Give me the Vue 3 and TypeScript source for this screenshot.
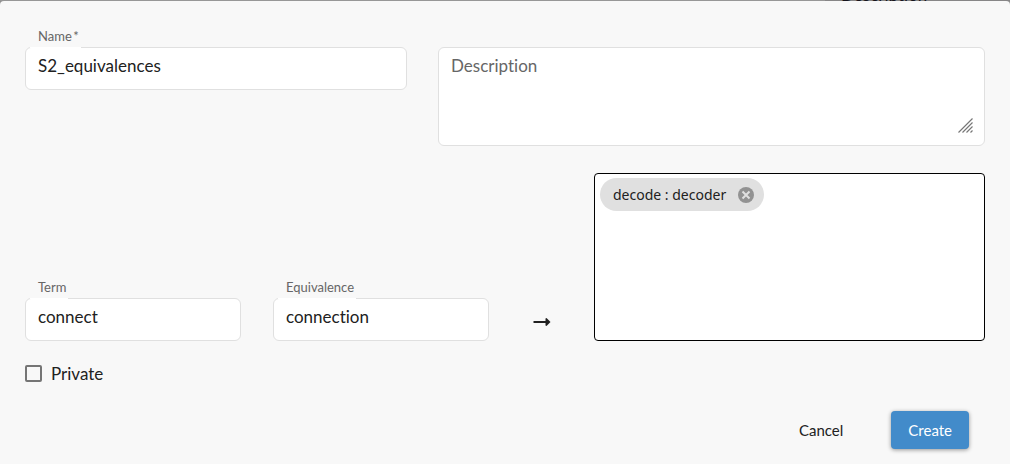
<script setup lang="ts">
import { ref } from 'vue'

const name = ref('S2_equivalences')
const description = ref('')
const term = ref('connect')
const equivalence = ref('connection')
const isPrivate = ref(false)
const pairs = ref<string[]>(['decode : decoder'])

function addPair(): void {
  if (term.value && equivalence.value) {
    pairs.value.push(`${term.value} : ${equivalence.value}`)
  }
}

function removePair(index: number): void {
  pairs.value.splice(index, 1)
}
</script>

<template>
  <div class="page">
    <div class="backdrop">
      <div class="backdrop-column"><span class="backdrop-text">Description</span></div>
    </div>
    <form class="dialog" role="dialog" aria-label="Create equivalences" @submit.prevent>
      <div class="row details">
        <div class="field">
          <label class="label" for="name">Name&thinsp;*</label>
          <input id="name" v-model="name" class="box" type="text" required />
        </div>
        <div class="field description">
          <textarea v-model="description" class="box area" placeholder="Description" aria-label="Description"></textarea>
          <svg class="grip" width="15" height="15" viewBox="0 0 15 15" aria-hidden="true">
            <path d="M.5 14.5 14.5.5M4.5 14.5l10-10M8.5 14.5l6-6M12.5 14.5l2-2" />
          </svg>
        </div>
      </div>

      <div class="row mapping">
        <div class="field">
          <label class="label" for="term">Term</label>
          <input id="term" v-model="term" class="box" type="text" />
        </div>
        <div class="field">
          <label class="label" for="equivalence">Equivalence</label>
          <input id="equivalence" v-model="equivalence" class="box" type="text" />
        </div>
        <button class="add" type="button" aria-label="Add equivalence" @click="addPair">
          <svg width="18" height="10" viewBox="0 0 18 10" aria-hidden="true">
            <path d="M.5 4h12V1.500l1-.5L17.500 5l-4 4-1-.5V6H.5z" />
          </svg>
        </button>
        <div class="chips">
          <span v-for="(pair, i) in pairs" :key="i" class="chip">
            {{ pair }}
            <button class="remove" type="button" :aria-label="`Remove ${pair}`" @click="removePair(i)">
              <svg width="16" height="16" viewBox="0 0 16 16" aria-hidden="true">
                <circle cx="8" cy="8" r="8" />
                <path d="m4.500 4.500 7 7m0-7-7 7" />
              </svg>
            </button>
          </span>
        </div>
      </div>

      <label class="private">
        <input v-model="isPrivate" type="checkbox" />
        Private
      </label>

      <div class="actions">
        <button class="button" type="button">Cancel</button>
        <button class="button primary" type="submit">Create</button>
      </div>
    </form>
  </div>
</template>

<style>
body {
  background: #8f8f8f;
}
</style>

<style scoped>
.page {
  display: flex;
  flex-direction: column;
  min-height: 100vh;
  font-family: Lato, "Liberation Sans", sans-serif;
  font-variant-ligatures: none;
  color: #212121;
}

.page *,
.page *::before {
  box-sizing: border-box;
}

.backdrop {
  display: flex;
  justify-content: flex-end;
  height: 1px;
  overflow: hidden;
  background: #979797;
}

.backdrop-column {
  display: flex;
  align-items: flex-end;
  width: 185px;
  padding-left: 16px;
  background: #878687;
}

.backdrop-text {
  font-size: 17px;
  line-height: 12px;
  color: #16141c;
}

.dialog {
  flex: 1;
  padding: 26px 25px 15px;
  border-radius: 4px 4px 0 0;
  background: #f8f8f8;
}

.row {
  display: grid;
}

.details {
  grid-template-columns: 382fr 547fr;
  column-gap: 31px;
}

.mapping {
  grid-template-columns: 216fr 216fr 41px 391fr;
  column-gap: 32px;
  align-items: end;
  margin-top: 27px;
}

.field {
  display: flex;
  flex-direction: column;
  align-items: flex-start;
  min-width: 0;
}

.label {
  position: relative;
  height: 21px;
  margin: 0 0 -1px 5px;
  padding: 0 2px 0 8px;
  border-bottom: 1px solid #fff;
  font-size: 13px;
  line-height: 18px;
  color: #666;
}

.box {
  width: 100%;
  height: 43px;
  margin: 0;
  padding: 0 12px 6px;
  border: 1px solid #e0e0e0;
  border-radius: 6px;
  outline: none;
  background: #fff;
  font-family: inherit;
  font-size: 17px;
  font-variant-ligatures: none;
  color: #212121;
}

.description {
  position: relative;
  padding-top: 20px;
}

.area {
  display: block;
  height: 99px;
  padding: 8px 12px;
  line-height: 20px;
  resize: none;
}

.area::placeholder {
  color: #666;
  opacity: 1;
}

.grip {
  position: absolute;
  right: 12px;
  bottom: 13px;
  fill: none;
  stroke: #777;
  stroke-width: 1.2;
}

.add {
  display: flex;
  justify-content: center;
  align-items: center;
  height: 38px;
  padding: 0;
  border: 0;
  background: none;
}

.add svg {
  fill: #212121;
}

.chips {
  display: flex;
  flex-wrap: wrap;
  align-content: flex-start;
  gap: 5px;
  min-height: 168px;
  padding: 4px 5px;
  border: 1px solid #000;
  border-radius: 4px;
  background: #fff;
}

.chip {
  display: flex;
  align-items: center;
  gap: 12px;
  height: 33px;
  padding: 0 10px 0 13px;
  border-radius: 17px;
  background: #e0e0e0;
  font-family: "Noto Sans", "Open Sans", sans-serif;
  font-size: 14px;
}

.remove {
  display: flex;
  padding: 0;
  border: 0;
  background: none;
}

.remove svg {
  fill: #929292;
  stroke: #e0e0e0;
}

.remove circle {
  stroke: none;
}

.remove path {
  stroke-width: 2;
}

.private {
  display: flex;
  align-items: center;
  gap: 9px;
  width: fit-content;
  height: 24px;
  margin-top: 20px;
  font-size: 17px;
}

.private input {
  appearance: none;
  width: 17px;
  height: 17px;
  margin: 0;
  border: 2px solid #757575;
  border-radius: 2px;
}

.private input:checked {
  background: #428bca;
}

.actions {
  display: flex;
  justify-content: flex-end;
  gap: 31px;
  margin-top: 26px;
  padding-right: 16px;
}

.button {
  height: 38px;
  padding: 0 17px;
  border: 0;
  border-radius: 4px;
  background: none;
  font-family: inherit;
  font-size: 15px;
  color: #212121;
}

.primary {
  background: #428bca;
  box-shadow: 0 1px 4px rgba(0, 0, 0, 0.4);
  color: #fff;
}
</style>
